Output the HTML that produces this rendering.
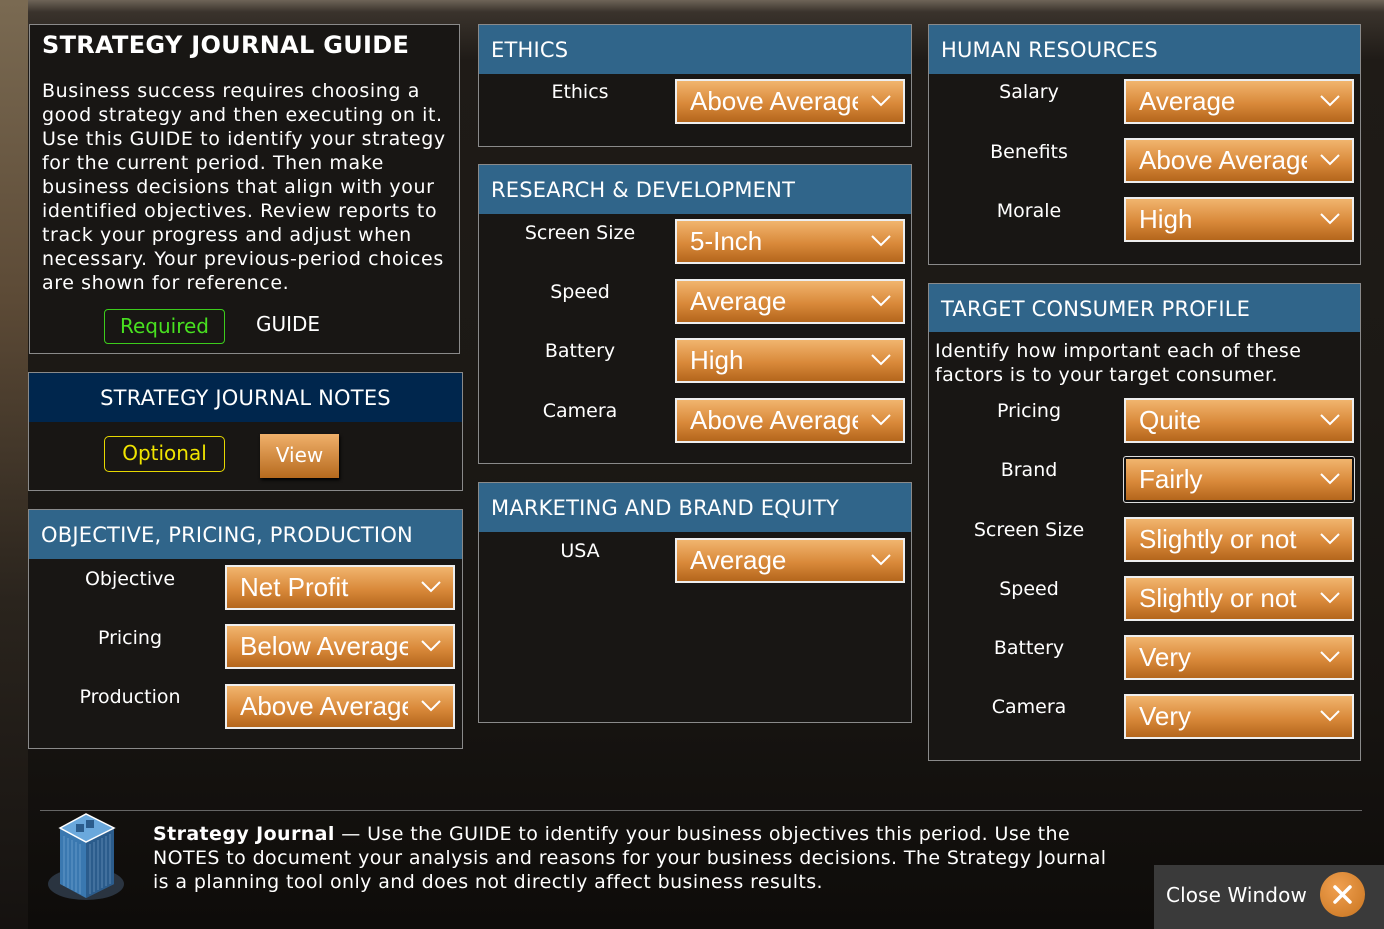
<!DOCTYPE html>
<html><head><meta charset="utf-8"><style>
*{box-sizing:border-box;margin:0;padding:0}
body{width:1384px;height:929px;overflow:hidden;position:relative;font-family:"DejaVu Sans","Liberation Sans",sans-serif;color:#fff;
background:linear-gradient(180deg,#6e6458 0,#3a332c 12px,#1f1b17 60px,#1c1915 400px,#171411 700px,#0e0c0a 929px);}
.edge{position:absolute;left:0;top:0;width:28px;height:929px;background:linear-gradient(180deg,#7a6a52 0,#5c4a36 300px,#2a241d 600px,#151210 929px)}
.p{position:absolute;background:#181614;border:1px solid #8a8a8a}
.h{position:absolute;left:0;right:0;top:0;height:49px;background:#30658a;font-size:21px;line-height:50px;padding-left:12px;letter-spacing:.2px}
.l{position:absolute;font-size:19px;text-align:center;width:200px;line-height:24px}
.s{position:absolute;width:230px;height:45px;border:2px solid #eee;background:linear-gradient(180deg,#f1b56e 0,#d9893a 55%,#b4661c 100%);font-family:"Liberation Sans",Arial,sans-serif;font-size:26px;line-height:41px;padding-left:13px;overflow:hidden;white-space:nowrap;color:#fff}
.s span{display:inline-block;width:168px;overflow:hidden}
.s svg{position:absolute;right:12px;top:14px}
</style></head><body>
<div class="edge"></div>

<div class="p" style="left:29px;top:24px;width:431px;height:330px">
  <div style="position:absolute;left:12px;top:6px;font-size:24px;font-weight:bold;letter-spacing:.3px">STRATEGY JOURNAL GUIDE</div>
  <div style="position:absolute;left:12px;top:54px;width:420px;font-size:19px;line-height:24px;letter-spacing:.6px">Business success requires choosing a good strategy and then executing on it. Use this GUIDE to identify your strategy for the current period. Then make business decisions that align with your identified objectives. Review reports to track your progress and adjust when necessary. Your previous-period choices are shown for reference.</div>
  <div style="position:absolute;left:74px;top:284px;width:121px;height:35px;border:1.5px solid #3ccc1c;border-radius:4px;color:#48e020;font-size:20px;text-align:center;line-height:32px">Required</div>
  <div style="position:absolute;left:226px;top:287px;font-size:20px">GUIDE</div>
</div>

<div class="p" style="left:28px;top:372px;width:435px;height:119px">
  <div class="h" style="background:#00264d;text-align:center;padding:0;font-size:21px;height:49px">STRATEGY JOURNAL NOTES</div>
  <div style="position:absolute;left:75px;top:63px;width:121px;height:36px;border:1.5px solid #e6d800;border-radius:5px;color:#f0e400;font-size:20px;text-align:center;line-height:33px">Optional</div>
  <div style="position:absolute;left:231px;top:61px;width:79px;height:44px;background:linear-gradient(180deg,#f0b06a,#b66a1e);box-shadow:1px 2px 3px #000;font-size:20px;text-align:center;line-height:42px">View</div>
</div>

<div class="p" style="left:28px;top:509px;width:435px;height:240px">
  <div class="h">OBJECTIVE, PRICING, PRODUCTION</div>
  <div class="l" style="left:1px;top:57px">Objective</div>
  <div class="l" style="left:1px;top:116px">Pricing</div>
  <div class="l" style="left:1px;top:175px">Production</div>
  <div class="s" style="left:196px;top:55px"><span>Net Profit</span><svg width="20" height="12"><path d="M1 1L10 10L19 1" stroke="#fff" stroke-width="2" fill="none"/></svg></div>
  <div class="s" style="left:196px;top:114px"><span>Below Average</span><svg width="20" height="12"><path d="M1 1L10 10L19 1" stroke="#fff" stroke-width="2" fill="none"/></svg></div>
  <div class="s" style="left:196px;top:174px"><span>Above Average</span><svg width="20" height="12"><path d="M1 1L10 10L19 1" stroke="#fff" stroke-width="2" fill="none"/></svg></div>
</div>

<div class="p" style="left:478px;top:24px;width:434px;height:123px">
  <div class="h">ETHICS</div>
  <div class="l" style="left:1px;top:55px">Ethics</div>
  <div class="s" style="left:196px;top:54px"><span>Above Average</span><svg width="20" height="12"><path d="M1 1L10 10L19 1" stroke="#fff" stroke-width="2" fill="none"/></svg></div>
</div>

<div class="p" style="left:478px;top:164px;width:434px;height:300px">
  <div class="h">RESEARCH &amp; DEVELOPMENT</div>
  <div class="l" style="left:1px;top:56px">Screen Size</div>
  <div class="l" style="left:1px;top:115px">Speed</div>
  <div class="l" style="left:1px;top:174px">Battery</div>
  <div class="l" style="left:1px;top:234px">Camera</div>
  <div class="s" style="left:196px;top:54px"><span>5-Inch</span><svg width="20" height="12"><path d="M1 1L10 10L19 1" stroke="#fff" stroke-width="2" fill="none"/></svg></div>
  <div class="s" style="left:196px;top:114px"><span>Average</span><svg width="20" height="12"><path d="M1 1L10 10L19 1" stroke="#fff" stroke-width="2" fill="none"/></svg></div>
  <div class="s" style="left:196px;top:173px"><span>High</span><svg width="20" height="12"><path d="M1 1L10 10L19 1" stroke="#fff" stroke-width="2" fill="none"/></svg></div>
  <div class="s" style="left:196px;top:233px"><span>Above Average</span><svg width="20" height="12"><path d="M1 1L10 10L19 1" stroke="#fff" stroke-width="2" fill="none"/></svg></div>
</div>

<div class="p" style="left:478px;top:482px;width:434px;height:241px">
  <div class="h">MARKETING AND BRAND EQUITY</div>
  <div class="l" style="left:1px;top:56px">USA</div>
  <div class="s" style="left:196px;top:55px"><span>Average</span><svg width="20" height="12"><path d="M1 1L10 10L19 1" stroke="#fff" stroke-width="2" fill="none"/></svg></div>
</div>

<div class="p" style="left:928px;top:24px;width:433px;height:241px">
  <div class="h">HUMAN RESOURCES</div>
  <div class="l" style="left:0px;top:55px">Salary</div>
  <div class="l" style="left:0px;top:115px">Benefits</div>
  <div class="l" style="left:0px;top:174px">Morale</div>
  <div class="s" style="left:195px;top:54px"><span>Average</span><svg width="20" height="12"><path d="M1 1L10 10L19 1" stroke="#fff" stroke-width="2" fill="none"/></svg></div>
  <div class="s" style="left:195px;top:113px"><span>Above Average</span><svg width="20" height="12"><path d="M1 1L10 10L19 1" stroke="#fff" stroke-width="2" fill="none"/></svg></div>
  <div class="s" style="left:195px;top:172px"><span>High</span><svg width="20" height="12"><path d="M1 1L10 10L19 1" stroke="#fff" stroke-width="2" fill="none"/></svg></div>
</div>

<div class="p" style="left:928px;top:283px;width:433px;height:478px">
  <div class="h" style="height:48px">TARGET CONSUMER PROFILE</div>
  <div style="position:absolute;left:6px;top:55px;font-size:19px;line-height:24px;letter-spacing:.4px">Identify how important each of these<br>factors is to your target consumer.</div>
  <div class="l" style="left:0px;top:115px">Pricing</div>
  <div class="l" style="left:0px;top:174px">Brand</div>
  <div class="l" style="left:0px;top:234px">Screen Size</div>
  <div class="l" style="left:0px;top:293px">Speed</div>
  <div class="l" style="left:0px;top:352px">Battery</div>
  <div class="l" style="left:0px;top:411px">Camera</div>
  <div class="s" style="left:195px;top:114px"><span>Quite</span><svg width="20" height="12"><path d="M1 1L10 10L19 1" stroke="#fff" stroke-width="2" fill="none"/></svg></div>
  <div class="s" style="left:195px;top:173px;border-color:#111;outline:1.5px solid #ddd;border-radius:2px"><span>Fairly</span><svg width="20" height="12"><path d="M1 1L10 10L19 1" stroke="#fff" stroke-width="2" fill="none"/></svg></div>
  <div class="s" style="left:195px;top:233px"><span style="width:180px">Slightly or not</span><svg width="20" height="12"><path d="M1 1L10 10L19 1" stroke="#fff" stroke-width="2" fill="none"/></svg></div>
  <div class="s" style="left:195px;top:292px"><span style="width:180px">Slightly or not</span><svg width="20" height="12"><path d="M1 1L10 10L19 1" stroke="#fff" stroke-width="2" fill="none"/></svg></div>
  <div class="s" style="left:195px;top:351px"><span>Very</span><svg width="20" height="12"><path d="M1 1L10 10L19 1" stroke="#fff" stroke-width="2" fill="none"/></svg></div>
  <div class="s" style="left:195px;top:410px"><span>Very</span><svg width="20" height="12"><path d="M1 1L10 10L19 1" stroke="#fff" stroke-width="2" fill="none"/></svg></div>
</div>

<div style="position:absolute;left:40px;top:810px;width:1322px;height:1px;background:#666"></div>
<svg style="position:absolute;left:46px;top:806px" width="82" height="96" viewBox="0 0 82 96">
  <ellipse cx="40" cy="78" rx="38" ry="16" fill="#2a3440"/>
  <polygon points="14,22 40,8 68,22 68,78 40,92 14,78" fill="#3a78b0"/>
  <polygon points="40,36 68,22 68,78 40,92" fill="#2b5c8c"/>
  <polygon points="14,22 40,8 68,22 40,36" fill="#6aa8dc" stroke="#fff" stroke-width="1.5"/>
  <path d="M18 30v50M22 32v50M26 34v50M30 36v50M34 38v50M44 38v50M48 36v50M52 34v50M56 32v50M60 30v50M64 28v50" stroke="#a8d0f0" stroke-width=".6" opacity=".6"/>
  <rect x="30" y="18" width="8" height="8" fill="#2b5c8c"/><rect x="40" y="14" width="8" height="8" fill="#2b5c8c"/>
</svg>
<div style="position:absolute;left:153px;top:822px;width:1000px;font-size:19px;line-height:24px;letter-spacing:.4px;white-space:nowrap"><b>Strategy Journal</b> — Use the GUIDE to identify your business objectives this period. Use the<br>NOTES to document your analysis and reasons for your business decisions. The Strategy Journal<br>is a planning tool only and does not directly affect business results.</div>
<div style="position:absolute;left:1154px;top:865px;width:230px;height:64px;background:#3a3a3a">
  <div style="position:absolute;left:12px;top:18px;font-size:20px;letter-spacing:.1px">Close Window</div>
  <div style="position:absolute;left:166px;top:7px;width:45px;height:45px;border-radius:50%;background:radial-gradient(circle at 40% 35%,#f0a050,#c8741f)">
    <svg width="45" height="45"><path d="M15 15L30 30M30 15L15 30" stroke="#fff" stroke-width="3.5" stroke-linecap="round"/></svg>
  </div>
</div>
</body></html>
